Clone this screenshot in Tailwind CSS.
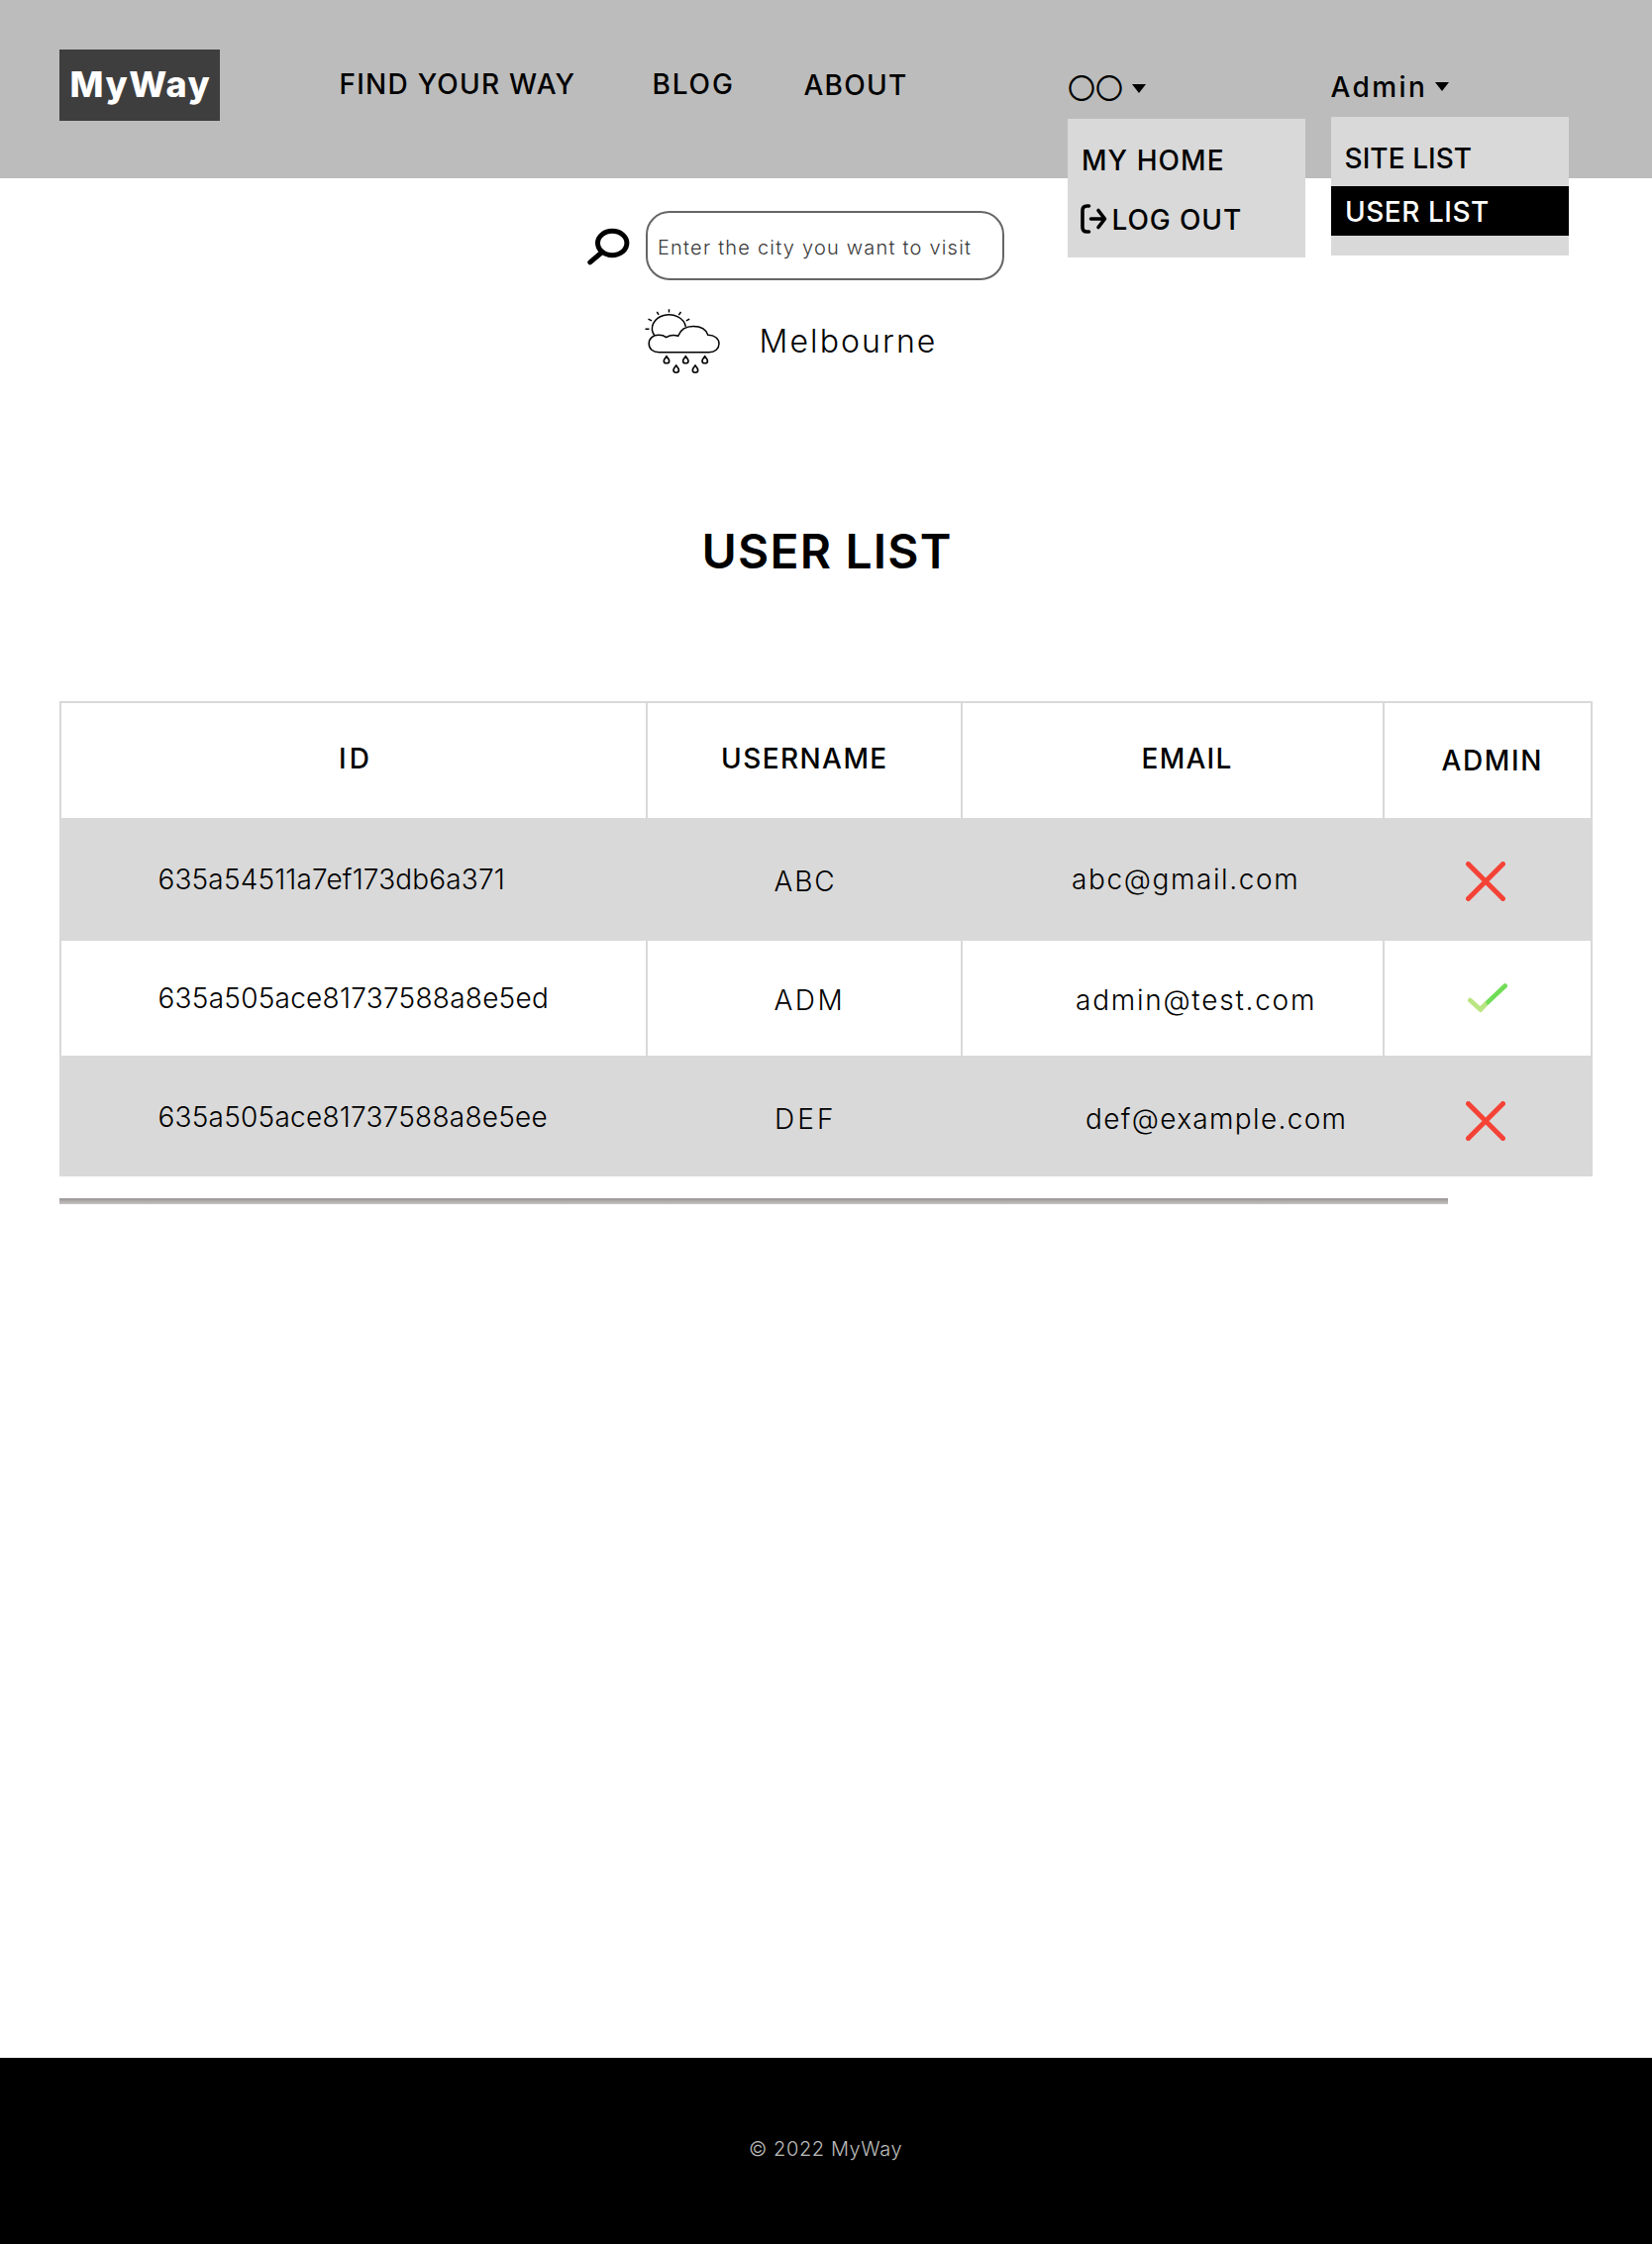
<!DOCTYPE html>
<html lang="en">
<head>
<meta charset="utf-8">
<title>MyWay – User list</title>
<script src="https://cdn.jsdelivr.net/npm/@tailwindcss/browser@4"></script>
</head>
<body class="flex min-h-[2266px] w-[1668px] flex-col bg-white font-['Inter','Noto_Sans_CJK_JP',sans-serif] text-[28px] leading-[34px] font-light text-black">

<header class="relative z-10 flex h-[180px] items-start bg-[#bcbcbc] pl-[60px]">
  <a class="mt-[50px] h-[72px] w-[162px] whitespace-nowrap bg-[#3e3e3e] pt-[13px] pl-[10.5px] text-[36px] leading-[44px] font-extrabold tracking-[1.5px] text-white">MyWay</a>
  <nav class="ml-[120.5px] flex w-[735.5px] items-start font-medium whitespace-nowrap">
    <a class="mt-[68px] w-[316px] tracking-[1.23px]">FIND YOUR WAY</a>
    <a class="mt-[68px] w-[153px] tracking-[1.83px]">BLOG</a>
    <a class="mt-[69px] tracking-[1.25px]">ABOUT</a>
  </nav>
  <div class="relative w-[266px]">
    <button class="mt-[71px] flex items-start">
      <span class="font-['Noto_Sans_CJK_JP',sans-serif] font-normal">〇〇</span>
      <svg class="mt-[14px] ml-[9px]" width="14" height="9" viewBox="0 0 14 9"><path d="M0 0h14L7 9z"/></svg>
    </button>
    <div class="absolute top-[120px] left-0 flex h-[140px] w-[240px] flex-col bg-[#d9d9d9] font-medium whitespace-nowrap">
      <a class="mt-[25px] pl-[14px] tracking-[1.05px]">MY HOME</a>
      <a class="mt-[26px] flex items-start pl-[13px] tracking-[0.9px]">
        <svg class="mt-px" width="28" height="30" viewBox="0 0 28 30" fill="none" stroke="#000" stroke-width="3.600" stroke-linecap="round" stroke-linejoin="round">
          <path d="M8.500 2H6.500Q2 2 2 6.500V23.500Q2 28 6.500 28H8.500"/>
          <path d="M10.500 15H23M18 6.500L24.500 15L18 23.500"/>
        </svg>
        <span class="pl-[3.5px]">LOG OUT</span>
      </a>
    </div>
  </div>
  <div class="relative w-[240px]">
    <button class="mt-[71px] flex items-start font-medium whitespace-nowrap">
      <span class="-ml-[0.5px] w-[104px] text-left tracking-[2.4px]">Admin</span>
      <svg class="mt-[12px] ml-[1px]" width="14" height="9" viewBox="0 0 14 9"><path d="M0 0h14L7 9z"/></svg>
    </button>
    <div class="absolute top-[118px] left-0 flex h-[140px] w-[240px] flex-col bg-[#d9d9d9] font-medium whitespace-nowrap">
      <a class="mt-[25px] pl-[13.5px] tracking-[0.06px]">SITE LIST</a>
      <a class="mt-[11px] h-[50px] bg-black pt-[9px] pl-[14px] tracking-[0.53px] text-white">USER LIST</a>
    </div>
  </div>
</header>

<main class="flex flex-1 flex-col">
  <section class="mt-[33px] flex items-start pl-[592px]">
    <svg class="mt-[16px]" width="46" height="40" viewBox="0 0 46 40" fill="none" stroke="#000">
      <ellipse cx="26.200" cy="16.500" rx="14.700" ry="12.200" stroke-width="5"/>
      <path d="M16 25.500L3.800 35.800" stroke-width="5" stroke-linecap="round"/>
    </svg>
    <div class="ml-[13.5px] h-[69.5px] w-[362.500px] rounded-[24px] border-2 border-[#666] pt-[23px] pl-[10.5px] text-[20px] leading-[24px] tracking-[1.21px] whitespace-nowrap text-[#3a3a3a]">Enter the city you want to visit</div>
  </section>
  <section class="mt-[27.5px] flex items-start pl-[650px]">
    <svg width="80" height="70" viewBox="650 310 80 70" fill="none" stroke="#000" stroke-width="1.500" stroke-linecap="butt">
      <path d="M660.600 338.500A17 14 0 1 1 692.300 329.800"/>
      <path d="M675.500 312.300v3.200M663.300 314.800l1.800 3M687.500 315l-2.200 3.200M654.500 322.200l3.500 1.700M696.200 322.200l-3.300 1.700M651.500 332.300h4"/>
      <path d="M665.500 355.700C659 355.700 655.200 352 655.200 347C655.200 341.500 659.500 338.300 665 338.300C668.500 338.300 671 339.300 672.700 340.600C676 338.500 681 338 684.700 339.200C687 333 693 329.500 700 329.500C707.500 329.500 713 333 714.800 338.200C721.500 338.200 726 342 726 347C726 352 722 355.700 716 355.700Z"/>
      <g stroke-width="1.600">
        <path transform="translate(673 363.300)" d="M0-3.600C1.500-1.700 2.700-.1 2.700 1.100a2.700 2.400 0 0 1-5.400 0C-2.700-.1-1.500-1.700 0-3.600Z"/>
        <path transform="translate(692.300 363.300)" d="M0-3.600C1.500-1.700 2.700-.1 2.700 1.100a2.700 2.400 0 0 1-5.400 0C-2.700-.1-1.500-1.700 0-3.600Z"/>
        <path transform="translate(711.700 363.300)" d="M0-3.600C1.500-1.700 2.700-.1 2.700 1.100a2.700 2.400 0 0 1-5.400 0C-2.700-.1-1.500-1.700 0-3.600Z"/>
        <path transform="translate(682.700 372.700)" d="M0-3.600C1.500-1.700 2.700-.1 2.700 1.100a2.700 2.400 0 0 1-5.400 0C-2.700-.1-1.500-1.700 0-3.600Z"/>
        <path transform="translate(702 372.700)" d="M0-3.600C1.500-1.700 2.700-.1 2.700 1.100a2.700 2.400 0 0 1-5.400 0C-2.700-.1-1.500-1.700 0-3.600Z"/>
      </g>
    </svg>
    <span class="mt-[15px] ml-[36.5px] text-[32px] leading-[39px] tracking-[2.1px]">Melbourne</span>
  </section>

  <h1 class="mt-[148px] pl-[708.5px] text-[48px] leading-[58px] font-semibold tracking-[1.19px] whitespace-nowrap">USER LIST</h1>

  <div class="mt-[122px] ml-[60px] w-[1548px] border-2 border-[#d9d9d9] whitespace-nowrap">
    <div class="grid h-[116px] grid-cols-[592px_318px_426px_208px] font-medium">
      <div class="border-r-2 border-[#d9d9d9] pt-[39px] pl-[280px] tracking-[3px]">ID</div>
      <div class="border-r-2 border-[#d9d9d9] pt-[39px] pl-[74px] tracking-[1.42px]">USERNAME</div>
      <div class="border-r-2 border-[#d9d9d9] pt-[39px] pl-[180.5px] tracking-[1.25px]">EMAIL</div>
      <div class="pt-[41px] pl-[57.5px] tracking-[1.65px]">ADMIN</div>
    </div>
    <div class="grid h-[124px] grid-cols-[592px_318px_426px_208px] bg-[#d9d9d9]">
      <div class="pt-[45px] pl-[97.5px] tracking-[0.15px]">635a54511a7ef173db6a371</div>
      <div class="pt-[47px] pl-[127.5px] tracking-[1.9px]">ABC</div>
      <div class="pt-[45px] pl-[110px] tracking-[1.6px]">abc@gmail.com</div>
      <div class="pt-[44px] pl-[82px]"><svg width="40" height="40" viewBox="0 0 40 40" stroke="#f44336" stroke-width="5" stroke-linecap="round"><path d="M2.500 2.500L37.500 37.500M37.500 2.500L2.500 37.500"/></svg></div>
    </div>
    <div class="grid h-[116px] grid-cols-[592px_318px_426px_208px]">
      <div class="border-r-2 border-[#d9d9d9] pt-[41px] pl-[97.5px] tracking-[0.25px]">635a505ace81737588a8e5ed</div>
      <div class="border-r-2 border-[#d9d9d9] pt-[43px] pl-[127.5px] tracking-[2.5px]">ADM</div>
      <div class="border-r-2 border-[#d9d9d9] pt-[43px] pl-[114px] tracking-[1.75px]">admin@test.com</div>
      <div class="pt-[43px] pl-[84px]"><svg width="40" height="30" viewBox="0 0 40 30" fill="none" stroke-width="4.600" stroke-linecap="round"><path stroke="#70dd56" d="M19 20.200L37.700 2.500"/><path stroke="#b9e583" stroke-linecap="butt" d="M12.700 26.200L18.700 20.400"/><path stroke="#b9e583" d="M2.300 17L12.700 26.500"/><path fill="#b9e583" stroke="none" d="M10 25.500L18.500 17.200V24L13 29.500Z"/></svg></div>
    </div>
    <div class="grid h-[120px] grid-cols-[592px_318px_426px_208px] bg-[#d9d9d9]">
      <div class="pt-[45px] pl-[97.5px] tracking-[0.23px]">635a505ace81737588a8e5ee</div>
      <div class="pt-[47px] pl-[128px] tracking-[3.1px]">DEF</div>
      <div class="pt-[47px] pl-[124px] tracking-[1.33px]">def@example.com</div>
      <div class="pt-[46px] pl-[82px]"><svg width="40" height="40" viewBox="0 0 40 40" stroke="#f44336" stroke-width="5" stroke-linecap="round"><path d="M2.500 2.500L37.500 37.500M37.500 2.500L2.500 37.500"/></svg></div>
    </div>
  </div>
  <div class="mt-[22px] ml-[60px] h-[6px] w-[1402px] bg-linear-to-b from-[#989493] to-[#c9c4c4]"></div>
</main>

<footer class="h-[188px] bg-black pt-[80px] pl-[756px] text-[20px] leading-[24px] tracking-[0.6px] text-[#bcbcbc]">© 2022 MyWay</footer>
</body>
</html>
